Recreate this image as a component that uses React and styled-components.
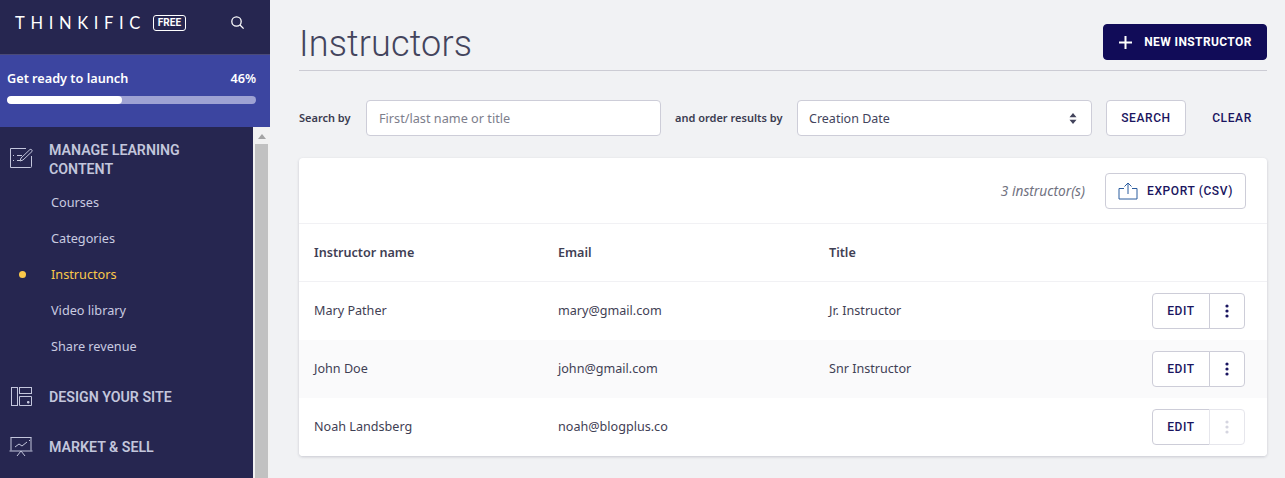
import React from 'react';
import styled, {createGlobalStyle} from 'styled-components';

const GlobalStyle = createGlobalStyle`
  html, body {
    margin: 0;
    height: 100%;
    overflow: hidden;
    background: #f1f2f4;
  }
  * {
    box-sizing: border-box;
  }
  body {
    font-family: "Noto Sans", "Liberation Sans", sans-serif;
  }
`;

const Shell = styled.div`
  display: flex;
  width: 1285px;
  height: 478px;
  overflow: hidden;
`;

const Sidebar = styled.aside`
  flex: 0 0 270px;
  display: flex;
  flex-direction: column;
  height: 478px;
  background: #262650;
`;

const Brand = styled.div`
  flex: 0 0 55px;
  display: flex;
  align-items: center;
  padding: 0 25px 9px 15px;
  border-bottom: 1px solid #4a4a78;
`;

const Logo = styled.div`
  font-family: "Lato", sans-serif;
  font-size: 16.5px;
  font-weight: 400;
  letter-spacing: 5.65px;
  color: #fff;
`;

const FreeTag = styled.span`
  margin-left: 7px;
  width: 33px;
  height: 16px;
  line-height: 13px;
  border: 1px solid #fff;
  border-radius: 3px;
  text-align: center;
  font-family: "Roboto", sans-serif;
  font-size: 10px;
  font-weight: 700;
  color: #fff;
`;

const BrandSearch = styled.span`
  margin-left: auto;
  display: flex;
  color: #fff;
`;

const Launch = styled.div`
  flex: 0 0 72px;
  padding: 14px 14px 0 7px;
  background: #3c45a0;
  color: #fff;
`;

const LaunchRow = styled.div`
  display: flex;
  justify-content: space-between;
  font-size: 12.7px;
  font-weight: 600;
  line-height: 18px;
`;

const Progress = styled.div`
  height: 8px;
  margin-top: 9px;
  border-radius: 4px;
  background: #9ea2d3;
  overflow: hidden;
`;

const ProgressFill = styled.div`
  height: 100%;
  border-radius: 4px;
  background: #fff;
`;

const SideBody = styled.div`
  flex: 1;
  display: flex;
  min-height: 0;
`;

const Nav = styled.nav`
  flex: 0 0 253px;
  padding-top: 14px;
  overflow: hidden;
`;

const Scrollbar = styled.div`
  flex: 0 0 17px;
  display: flex;
  flex-direction: column;
  align-items: center;
  background: #f1f1f1;
`;

const ScrollArrow = styled.div`
  flex: 0 0 19px;
  width: 0;
  margin-top: 7px;
  height: 0;
  max-height: 5px;
  border-left: 4px solid transparent;
  border-right: 4px solid transparent;
  border-bottom: 5px solid #a3a3a3;
`;

const ScrollThumb = styled.div`
  margin-top: 5px;
  width: 13px;
  margin-left: -1px;
  flex: 1;
  background: #c1c1c1;
`;

const Section = styled.div`
  display: flex;
  align-items: ${(props) => (props.$multi ? 'flex-start' : 'center')};
  padding-left: 9px;
  margin-top: ${(props) => props.$top || 0}px;
  color: #c3c6dc;
  font-family: "Roboto", sans-serif;
  font-size: 14.2px;
  font-weight: 600;
  line-height: 19px;
`;

const SectionIcon = styled.span`
  flex: 0 0 24px;
  display: flex;
  margin-right: 16px;
  margin-top: ${(props) => (props.$multi ? 6 : 0)}px;
`;

const SectionText = styled.span`
  margin-left: ${(props) => (props.$multi ? -1 : 0)}px;
`;

const SubList = styled.div`
  display: flex;
  flex-direction: column;
  margin-top: 5px;
`;

const SubItem = styled.a`
  position: relative;
  height: 36px;
  line-height: 36px;
  padding-left: 51px;
  font-size: 12.7px;
  color: ${(props) => (props.$active ? '#fbc94a' : '#c9cbe0')};
`;

const ActiveDot = styled.span`
  position: absolute;
  left: 19px;
  top: 15px;
  width: 7px;
  height: 7px;
  border-radius: 50%;
  background: #fbc94a;
`;

const Main = styled.main`
  flex: 1;
  min-width: 0;
  padding: 0 18px 0 29px;
`;

const PageHead = styled.header`
  display: flex;
  align-items: center;
  justify-content: space-between;
  height: 71px;
  padding-top: 24px;
  padding-bottom: 10px;
  border-bottom: 1px solid #ccccd4;
`;

const Title = styled.h1`
  margin: 3px 0 0;
  font-family: "Roboto", sans-serif;
  font-size: 36px;
  font-weight: 300;
  letter-spacing: 0.15px;
  color: #43445c;
`;

const Button = styled.button`
  display: inline-flex;
  align-items: center;
  justify-content: center;
  height: 36px;
  width: ${(props) => (props.$w ? `${props.$w}px` : 'auto')};
  padding: 0;
  border: 1px solid #cdcdd8;
  border-radius: 4px;
  background: #fff;
  color: #1a1560;
  font-family: "Roboto", sans-serif;
  font-size: 12px;
  font-weight: 500;
  letter-spacing: 0.6px;
`;

const PrimaryButton = styled(Button)`
  border-color: #110c58;
  background: #110c58;
  color: #fff;
  font-weight: 700;
  letter-spacing: 0.4px;
  gap: 11px;
`;

const GhostButton = styled(Button)`
  padding-left: 11px;
  border-color: transparent;
  background: transparent;
`;

const ExportButton = styled(Button)`
  gap: 9px;
`;

const Filters = styled.form`
  display: flex;
  align-items: center;
  margin-top: 29px;
`;

const FilterLabel = styled.label`
  flex: 0 0 ${(props) => props.$w}px;
  margin-bottom: 1px;
  font-size: 11px;
  font-weight: 600;
  color: #3b3c50;
  white-space: nowrap;
`;

const SearchInput = styled.input`
  flex: 0 0 295px;
  height: 36px;
  margin-right: 14px;
  padding: 0 12px;
  border: 1px solid #cdcdd8;
  border-radius: 4px;
  background: #fff;
  font-family: inherit;
  font-size: 12.7px;
  &::placeholder {
    color: #7d7e8c;
    opacity: 1;
  }
`;

const SelectBox = styled.div`
  display: flex;
  align-items: center;
  justify-content: space-between;
  flex: 0 0 295px;
  height: 36px;
  margin-right: 14px;
  padding: 0 14px 0 11px;
  border: 1px solid #cdcdd8;
  border-radius: 4px;
  background: #fff;
  font-size: 12.5px;
  color: #43445c;
`;

const Card = styled.section`
  margin-top: 22px;
  border-radius: 4px;
  background: #fff;
  box-shadow: 0 1px 3px rgba(40, 40, 70, 0.2);
  overflow: hidden;
`;

const CardTools = styled.div`
  display: flex;
  align-items: center;
  justify-content: flex-end;
  gap: 20px;
  height: 66px;
  padding-right: 21px;
  border-bottom: 1px solid #f1f1f4;
`;

const Count = styled.span`
  font-size: 13.7px;
  font-style: italic;
  color: #71727f;
`;

const Row = styled.div`
  display: grid;
  grid-template-columns: 244px 271px 1fr auto;
  align-items: center;
  height: 58px;
  padding: 0 22px 0 15px;
  border-bottom: ${(props) => (props.$line ? '1px solid #f1f1f4' : 'none')};
  background: ${(props) => (props.$shade ? '#fafafb' : '#fff')};
  font-size: 12.6px;
  color: #3f4054;
`;

const Cell = styled.span`
  margin-bottom: 2px;
`;

const HeadCell = styled.span`
  font-weight: 600;
`;

const ActionGroup = styled.div`
  display: flex;
`;

const EditButton = styled(Button)`
  border-radius: 4px 0 0 4px;
`;

const MoreButton = styled(Button)`
  margin-left: -1px;
  border-radius: 0 4px 4px 0;
  border-color: ${(props) => (props.disabled ? '#e6e6ec' : '#cdcdd8')};
  color: ${(props) => (props.disabled ? '#d5d5e0' : '#1a1560')};
`;

const SearchGlyph = () => (
  <svg width="15" height="15" viewBox="0 0 15 15" fill="none" stroke="currentColor" strokeWidth="1.3">
    <circle cx="6.5" cy="6.5" r="4.7"/>
    <path d="M10 10l3.6 3.6"/>
  </svg>
);

const ManageIcon = () => (
  <svg width="25" height="22" viewBox="0 0 25 22" fill="none" stroke="#c3c6dc" strokeWidth="1">
    <path d="M17 1.5H1.5v19h20a1 1 0 0 0 1-1V9"/>
    <path d="M4 8.5h1M4 13.5h1M8 8.5h5M8 13.5h3"/>
    <path d="M11 14l1-3 9-8.5a1.5 1.5 0 0 1 2 2L14 13z"/>
  </svg>
);

const DesignIcon = () => (
  <svg width="24" height="20" viewBox="0 0 24 20" fill="none" stroke="#c3c6dc" strokeWidth="1">
    <rect x="2.5" y="0.5" width="6" height="18"/>
    <rect x="10.5" y="0.5" width="12" height="6"/>
    <path d="M10.5 9.5h12v9h-12z"/>
    <path d="M18.5 14.5h1.5v1.5h-1.5z" fill="#c3c6dc"/>
  </svg>
);

const MarketIcon = () => (
  <svg width="24" height="20" viewBox="0 0 24 20" fill="none" stroke="#c3c6dc" strokeWidth="1">
    <path d="M1.5 0.5h21M2 0.5v13M22 0.5v13M0.5 14h23"/>
    <path d="M6 10l4-3 3 2 5-4M20 3.5h1"/>
    <path d="M12 14l-4 5M12 14l4 5"/>
  </svg>
);

const PlusGlyph = () => (
  <svg width="15" height="15" viewBox="0 0 15 15" stroke="#fff" strokeWidth="2">
    <path d="M7.5 1v13M1 7.5h13"/>
  </svg>
);

const SortGlyph = () => (
  <svg width="8" height="11" viewBox="0 0 8 11" fill="#43445c">
    <path d="M4 0l3.5 4.2h-7zM4 11L.5 6.8h7z"/>
  </svg>
);

const ExportGlyph = () => (
  <svg width="20" height="18" viewBox="0 0 20 18" fill="none" stroke="#2b5c9e" strokeWidth="1">
    <path d="M6 6.5H1v10.5h18V6.5h-5"/>
    <path d="M10 12V1M6.5 4.5L10 1l3.5 3.5"/>
  </svg>
);

const DotsGlyph = () => (
  <svg width="4" height="14" viewBox="0 0 4 14" fill="currentColor">
    <circle cx="2" cy="2" r="1.6"/>
    <circle cx="2" cy="7" r="1.6"/>
    <circle cx="2" cy="12" r="1.6"/>
  </svg>
);

const subItems = ['Courses', 'Categories', 'Instructors', 'Video library', 'Share revenue'];

const instructors = [
  {name: 'Mary Pather', email: 'mary@gmail.com', title: 'Jr. Instructor'},
  {name: 'John Doe', email: 'john@gmail.com', title: 'Snr Instructor', shade: true},
  {name: 'Noah Landsberg', email: 'noah@blogplus.co', title: '', locked: true},
];

export default function App() {
  return (
    <Shell>
      <GlobalStyle/>
      <Sidebar>
        <Brand>
          <Logo>THINKIFIC</Logo>
          <FreeTag>FREE</FreeTag>
          <BrandSearch><SearchGlyph/></BrandSearch>
        </Brand>
        <Launch>
          <LaunchRow>
            <span>Get ready to launch</span>
            <span>46%</span>
          </LaunchRow>
          <Progress>
            <ProgressFill style={{width: '46%'}}/>
          </Progress>
        </Launch>
        <SideBody>
          <Nav>
            <Section $multi>
              <SectionIcon $multi><ManageIcon/></SectionIcon>
              <SectionText $multi>MANAGE LEARNING<br/>CONTENT</SectionText>
            </Section>
            <SubList>
              {subItems.map((item) => (
                <SubItem key={item} $active={item === 'Instructors'}>
                  {item === 'Instructors' && <ActiveDot/>}
                  {item}
                </SubItem>
              ))}
            </SubList>
            <Section $top={23}>
              <SectionIcon><DesignIcon/></SectionIcon>
              <SectionText>DESIGN YOUR SITE</SectionText>
            </Section>
            <Section $top={30}>
              <SectionIcon><MarketIcon/></SectionIcon>
              <SectionText>MARKET &amp; SELL</SectionText>
            </Section>
          </Nav>
          <Scrollbar>
            <ScrollArrow/>
            <ScrollThumb/>
          </Scrollbar>
        </SideBody>
      </Sidebar>
      <Main>
        <PageHead>
          <Title>Instructors</Title>
          <PrimaryButton $w={164}><PlusGlyph/>NEW INSTRUCTOR</PrimaryButton>
        </PageHead>
        <Filters>
          <FilterLabel $w={67}>Search by</FilterLabel>
          <SearchInput placeholder="First/last name or title"/>
          <FilterLabel $w={122}>and order results by</FilterLabel>
          <SelectBox>
            <span>Creation Date</span>
            <SortGlyph/>
          </SelectBox>
          <Button $w={80}>SEARCH</Button>
          <GhostButton $w={81}>CLEAR</GhostButton>
        </Filters>
        <Card>
          <CardTools>
            <Count>3 instructor(s)</Count>
            <ExportButton $w={141}><ExportGlyph/>EXPORT (CSV)</ExportButton>
          </CardTools>
          <Row $line>
            <HeadCell>Instructor name</HeadCell>
            <HeadCell>Email</HeadCell>
            <HeadCell>Title</HeadCell>
            <span/>
          </Row>
          {instructors.map((person) => (
            <Row key={person.email} $shade={person.shade}>
              <Cell>{person.name}</Cell>
              <Cell>{person.email}</Cell>
              <Cell>{person.title}</Cell>
              <ActionGroup>
                <EditButton $w={58}>EDIT</EditButton>
                <MoreButton $w={36} disabled={person.locked}><DotsGlyph/></MoreButton>
              </ActionGroup>
            </Row>
          ))}
        </Card>
      </Main>
    </Shell>
  );
}
